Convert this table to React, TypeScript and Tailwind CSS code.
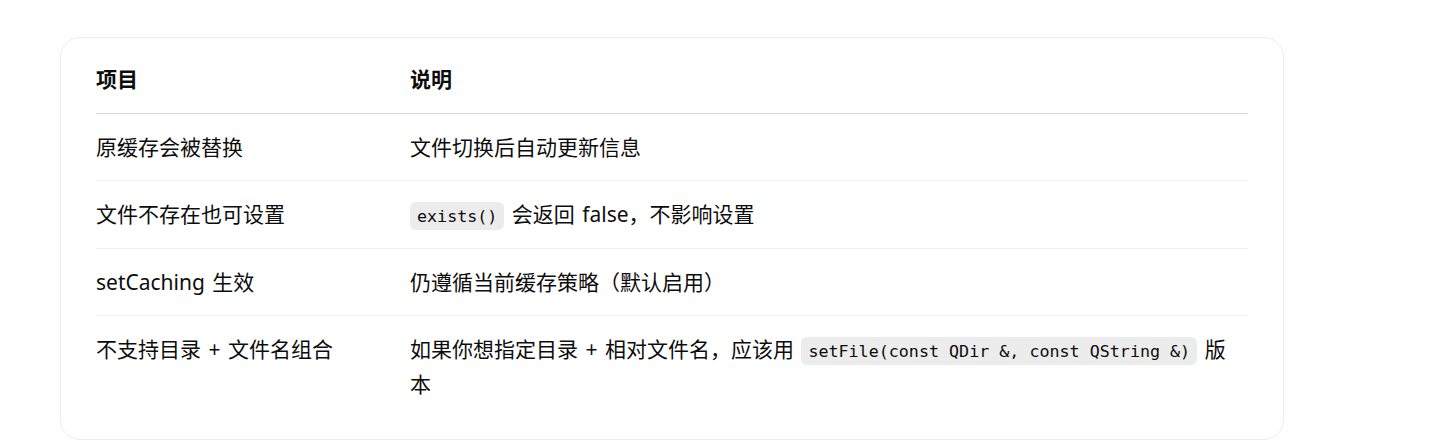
import React from "react";

const sans = { fontFamily: '"Noto Sans", "Noto Sans CJK SC", sans-serif' };

function Code({ children }: { children: React.ReactNode }) {
  return (
    <code className="inline-block rounded-[6px] bg-[#ececec] px-[7px] py-[4px] align-middle font-['DejaVu_Sans_Mono',monospace] text-[16.7px] leading-[20px] text-[#0d0d0d] [word-spacing:0px]">
      {children}
    </code>
  );
}

export default function App() {
  const rows: [React.ReactNode, React.ReactNode][] = [
    ["原缓存会被替换", "文件切换后自动更新信息"],
    [
      "文件不存在也可设置",
      <>
        <Code>exists()</Code> 会返回 false，不影响设置
      </>,
    ],
    ["setCaching 生效", "仍遵循当前缓存策略（默认启用）"],
    [
      "不支持目录 + 文件名组合",
      <>
        如果你想指定目录 + 相对文件名，应该用 <Code>setFile(const QDir &amp;, const QString &amp;)</Code> 版本
      </>,
    ],
  ];
  return (
    <div className="min-h-[446px] bg-white pl-[60px] pt-[37px]" style={sans}>
      <div className="w-[1224px] rounded-[20px] border border-[#ececec] px-[35px] pb-[22px] pt-[8px]">
        <table className="w-full table-fixed border-collapse text-left text-[21px] text-[#0d0d0d] [word-spacing:2px]">
          <colgroup>
            <col className="w-[314px]" />
            <col />
          </colgroup>
          <thead>
            <tr className="border-b border-[#d9d9d9]">
              <th className="py-[16px] pr-[16px] font-bold leading-[34.5px]">项目</th>
              <th className="py-[16px] pr-[16px] font-bold leading-[34.5px]">说明</th>
            </tr>
          </thead>
          <tbody>
            {rows.map((r, i) => (
              <tr key={i} className={i < rows.length - 1 ? "border-b border-[#f0f0f0]" : ""}>
                <td className="py-[16px] pr-[16px] align-top leading-[34.5px]">{r[0]}</td>
                <td className="py-[16px] pr-[16px] align-top leading-[34.5px]">{r[1]}</td>
              </tr>
            ))}
          </tbody>
        </table>
      </div>
    </div>
  );
}
